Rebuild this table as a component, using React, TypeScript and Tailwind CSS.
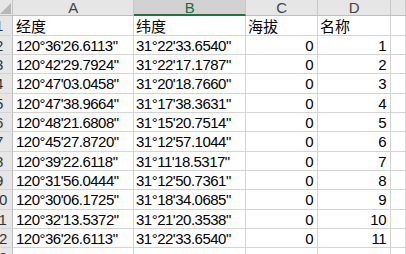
import React from "react";

const A = [
  "120°36'26.6113\"",
  "120°42'29.7924\"",
  "120°47'03.0458\"",
  "120°47'38.9664\"",
  "120°48'21.6808\"",
  "120°45'27.8720\"",
  "120°39'22.6118\"",
  "120°31'56.0444\"",
  "120°30'06.1725\"",
  "120°32'13.5372\"",
  "120°36'26.6113\"",
];
const B = [
  "31°22'33.6540\"",
  "31°22'17.1787\"",
  "31°20'18.7660\"",
  "31°17'38.3631\"",
  "31°15'20.7514\"",
  "31°12'57.1044\"",
  "31°11'18.5317\"",
  "31°12'50.7361\"",
  "31°18'34.0685\"",
  "31°21'20.3538\"",
  "31°22'33.6540\"",
];

const heights = ["h-[20px]", "h-[19px]", "h-[19px]", "h-[20px]", "h-[19px]", "h-[19px]", "h-[20px]", "h-[19px]", "h-[19px]", "h-[20px]", "h-[19px]", "h-[19px]", "h-[20px]"];

function RowNum({ n }: { n: number }) {
  return (
    <div className="w-[13px] shrink-0 bg-[#e6e6e6] border-r border-b border-r-[#bfbfbf] border-b-[#d4d4d4] overflow-hidden flex items-center">
      <div className="w-[30px] shrink-0 ml-[-16px] text-center text-[15px] text-[#333]">{n}</div>
    </div>
  );
}

const cell = "border-r border-b border-[#d4d4d4] flex items-center overflow-hidden whitespace-nowrap";
const cjk = "font-['Noto_Sans_CJK_SC','Liberation_Sans',sans-serif] tracking-normal text-[15px]";

function Row({ idx, cells, header }: { idx: number; cells: string[]; header?: boolean }) {
  const rAlign = header ? "justify-start pl-[2px]" : "justify-end pr-[4px]";
  return (
    <div className={`flex ${heights[idx]} box-border`}>
      <RowNum n={idx + 1} />
      <div className={`w-[121px] shrink-0 pl-[3px] ${cell} ${header ? cjk : ""}`}>{cells[0]}</div>
      <div className={`w-[112px] shrink-0 pl-[2px] ${cell} ${header ? cjk : ""}`}>{cells[1]}</div>
      <div className={`w-[72px] shrink-0 ${rAlign} ${cell} ${header ? cjk : ""}`}>{cells[2]}</div>
      <div className={`w-[73px] shrink-0 ${rAlign} ${cell} ${header ? cjk : ""}`}>{cells[3]}</div>
      <div className={`flex-1 ${cell}`}></div>
    </div>
  );
}

export default function App() {
  const hdr = "h-full border-r border-b border-r-[#c6c6c6] border-b-[#bfbfbf] bg-[#e6e6e6] flex items-center justify-center text-[15px] text-[#444]";
  return (
    <div className="w-[406px] h-[254px] overflow-hidden bg-white text-black font-['Liberation_Sans',Arial,sans-serif] text-[15px] tracking-[-0.5px] leading-none">
      <div className="flex h-[16px]">
        <div className={`w-[13px] shrink-0 ${hdr} relative overflow-hidden`}>
          <svg width="13" height="16" className="absolute left-0 top-0">
            <polygon points="11,3 11,14 0,14" fill="#b7b7b7" />
          </svg>
        </div>
        <div className={`w-[121px] shrink-0 ${hdr}`}>A</div>
        <div className="w-[112px] shrink-0 h-full border-r border-r-[#c6c6c6] border-b-2 border-b-[#217346] bg-[#d2d2d2] flex items-center justify-center text-[15px] text-[#1d6b40]">B</div>
        <div className={`w-[72px] shrink-0 ${hdr}`}>C</div>
        <div className={`w-[73px] shrink-0 ${hdr}`}>D</div>
        <div className={`flex-1 ${hdr}`}></div>
      </div>
      <Row idx={0} cells={["经度", "纬度", "海拔", "名称"]} header />
      {A.map((a, i) => (
        <Row key={i} idx={i + 1} cells={[a, B[i], "0", String(i + 1)]} />
      ))}
      <Row idx={12} cells={["", "", "", ""]} />
    </div>
  );
}
